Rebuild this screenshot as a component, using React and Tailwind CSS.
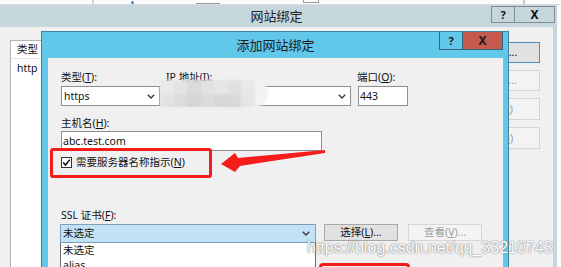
const Chevron = () => (
  <svg width="8" height="5" viewBox="0 0 8 5" className="shrink-0">
    <path d="M0.8 0.8 L4 4 L7.2 0.8" fill="none" stroke="#333" strokeWidth="1.3" />
  </svg>
);

const blurCells = [
  "#e9e9e9", "#e4e4e4", "#dadada", "#e2e2e2", "#e6e6e6", "#e0e0e0", "#e8e8e8", "#f2f2f2",
  "#e3e3e3", "#dcdcdc", "#d6d6d6", "#dcdcdc", "#d8d8d8", "#d9d9d9", "#e6e6e6", "#f4f4f4",
];

export default function App() {
  return (
    <div className="relative w-[561px] h-[267px] overflow-hidden bg-[#fbfbfb] font-['Noto_Sans','Noto_Sans_CJK_SC',sans-serif] text-[10.5px] leading-none text-[#111]">
      {/* background app strip */}
      <div className="relative h-[5px] border-b border-[#dcdcdc]">
        <span className="absolute left-[92px] top-0 w-[2px] h-[5px] bg-[#d4d4d4]" />
        <span className="absolute left-[131px] top-[1px] w-[3px] h-[3px] rounded-full bg-[#3b82c4]" />
        <span className="absolute left-[196px] top-[3px] w-[24px] h-[1px] bg-[#9a9a9a]" />
        <span className="absolute left-[303px] top-0 w-[16px] h-[3px] border-b border-x border-[#9a9a9a]" />
        <span className="absolute left-[523px] top-0 w-[2px] h-[5px] bg-[#c8c8c8]" />
      </div>

      {/* outer window: 网站绑定 */}
      <div className="absolute left-[-4px] top-[5px] w-[561px] h-[275px] bg-[#c5d6dc] flex flex-col px-[4px]">
        <div className="h-[25px] flex items-center justify-center text-[13px] text-[#222]">网站绑定</div>
        <div className="absolute right-[2px] top-[1px] flex h-[17px]">
          <div className="w-[24px] h-full border border-[#7d8d94] flex items-center justify-center text-[11px] font-bold">?</div>
          <div className="w-[40px] h-full border border-l-0 border-[#7d8d94] flex items-center justify-center text-[12px] font-bold">X</div>
        </div>
        <div className="flex-1 bg-[#f0f0f0] flex pl-[10px] pt-[13px] gap-[10px]">
          <div className="w-[432px] h-[240px] bg-white border border-[#b4b4b4] flex flex-col">
            <div className="h-[18px] flex items-center pl-[6px] border-b border-[#e5e5e5]">类型</div>
            <div className="h-[18px] flex items-center pl-[6px]">http</div>
          </div>
          <div className="w-[88px] pt-[2px] flex flex-col gap-[7px]">
            <div className="h-[21px] bg-[#e1e1e1] border border-[#4d8fc4] flex items-center justify-center">添加(<u>A</u>)...</div>
            <div className="h-[21px] bg-[#f3f3f3] border border-[#d4d4d4] flex items-center justify-center text-[#9a9a9a]">编辑(<u>E</u>)...</div>
            <div className="h-[22px] bg-[#f3f3f3] border border-[#d4d4d4] flex items-center justify-center text-[#9a9a9a]">删除(<u>R</u>)</div>
            <div className="h-[22px] bg-[#f3f3f3] border border-[#d4d4d4] flex items-center justify-center text-[#9a9a9a]">浏览(<u>B</u>)</div>
          </div>
        </div>
      </div>

      {/* inner window: 添加网站绑定 */}
      <div className="absolute left-[41px] top-[31px] w-[468px] h-[250px] bg-[#62c8ea] border border-[#42829e] flex flex-col pl-[6px] pr-[5px]">
        <div className="relative h-[26px] flex items-center justify-center text-[13px] text-[#1a1a1a]">
          添加网站绑定
          <div className="absolute right-0 top-0 flex h-[18px]">
            <div className="w-[24px] h-full border border-t-0 border-[#2e6680] flex items-center justify-center text-[11px] font-bold">?</div>
            <div className="w-[40px] h-full bg-[#c75a4f] border border-l-0 border-t-0 border-[#2e6680] flex items-center justify-center text-[12px] font-bold">X</div>
          </div>
        </div>

        <div className="relative flex-1 bg-[#f0f0f0] pl-[13px] pt-[11px] flex flex-col">
          {/* row 1 */}
          <div className="flex">
            <div className="w-[99px] flex flex-col">
              <div className="h-[16px] mb-[1px] flex items-center">类型(<u>T</u>):</div>
              <div className="h-[20px] bg-white border border-[#8f8f8f] flex items-center justify-between pl-[2px] pr-[4px]">
                <span>https</span>
                <Chevron />
              </div>
            </div>
            <div className="relative ml-[6px] w-[185px] flex flex-col">
              <div className="h-[16px] mb-[1px] flex items-center">IP 地址(<u>I</u>):</div>
              <div className="h-[20px] bg-white border border-[#8f8f8f] flex items-center justify-end pr-[4px]">
                <Chevron />
              </div>
              <div className="absolute left-[-6px] top-[11px] w-[108px] h-[27px] grid grid-cols-8 rounded-r-full overflow-hidden blur-[1px]">
                {blurCells.map((c, i) => (
                  <div key={i} style={{ backgroundColor: c }} />
                ))}
              </div>
            </div>
            <div className="ml-[7px] w-[50px] flex flex-col">
              <div className="h-[16px] mb-[1px] flex items-center -ml-[1px]">端口(<u>O</u>):</div>
              <div className="h-[20px] bg-white border border-[#8f8f8f] flex items-center pl-[1px]">443</div>
            </div>
          </div>

          {/* host name */}
          <div className="mt-[9px] h-[16px] flex items-center">主机名(<u>H</u>):</div>
          <div className="h-[20px] w-[261px] bg-white border border-[#8f8f8f] flex items-center pl-[1px]">abc.test.com</div>

          {/* SNI checkbox */}
          <div className="mt-[3px] h-[16px] flex items-center">
            <div className="w-[11px] h-[11px] bg-white border border-[#333] flex items-center justify-center">
              <svg width="9" height="9" viewBox="0 0 9 9">
                <path d="M1.2 4.6 L3.5 7 L7.8 1.6" fill="none" stroke="#111" strokeWidth="1.5" />
              </svg>
            </div>
            <span className="ml-[4px]">需要服务器名称指示(<u>N</u>)</span>
          </div>

          {/* SSL */}
          <div className="mt-[37px] h-[16px] flex items-center">SSL 证书(<u>F</u>):</div>
          <div className="mt-[1px] flex items-start">
            <div className="relative -ml-[1px] w-[256px]">
              <div className="h-[19px] bg-[#c4e2f5] border border-[#7c9fbd] flex items-center justify-between pl-[2px] pr-[5px]">
                <span>未选定</span>
                <Chevron />
              </div>
              <div className="absolute left-0 top-full w-full h-[40px] bg-white border border-t-0 border-[#6a6a6a] flex flex-col pl-[2px]">
                <div className="h-[15px] flex items-center">未选定</div>
                <div className="h-[15px] flex items-center">alias</div>
              </div>
            </div>
            <div className="ml-[8px] w-[74px] h-[17px] bg-[#e1e1e1] border border-[#a8a8a8] flex items-center justify-center">选择(<u>L</u>)...</div>
            <div className="ml-[10px] w-[74px] h-[17px] bg-[#f4f4f4] border border-[#d6d6d6] flex items-center justify-center text-[#9d9d9d]">查看(<u>V</u>)...</div>
          </div>

          {/* red annotations */}
          <div className="absolute left-[2px] top-[90px] w-[162px] h-[30px] border-[3px] border-[#f51c1c] rounded-[3px]" />
          <div className="absolute left-[271px] top-[205px] w-[91px] h-[30px] border-[3px] border-[#f51c1c] rounded-[4px]" />
        </div>
      </div>

      {/* red arrow */}
      <svg className="absolute left-0 top-0 pointer-events-none" width="561" height="267" viewBox="0 0 561 267">
        <polygon points="221,164 235,153 238,158 325,150 325,153 240,166 235,172" fill="#f51c1c" />
      </svg>

      {/* watermark */}
      <div className="absolute left-[307px] top-[240px] text-[16px] leading-none font-['Liberation_Sans',Arial,sans-serif] text-white [text-shadow:0_0_1px_#6f6f6f,0_0_2px_#9a9a9a] whitespace-nowrap">
        https://blog.csdn.net/qq_33210743
      </div>
    </div>
  );
}
